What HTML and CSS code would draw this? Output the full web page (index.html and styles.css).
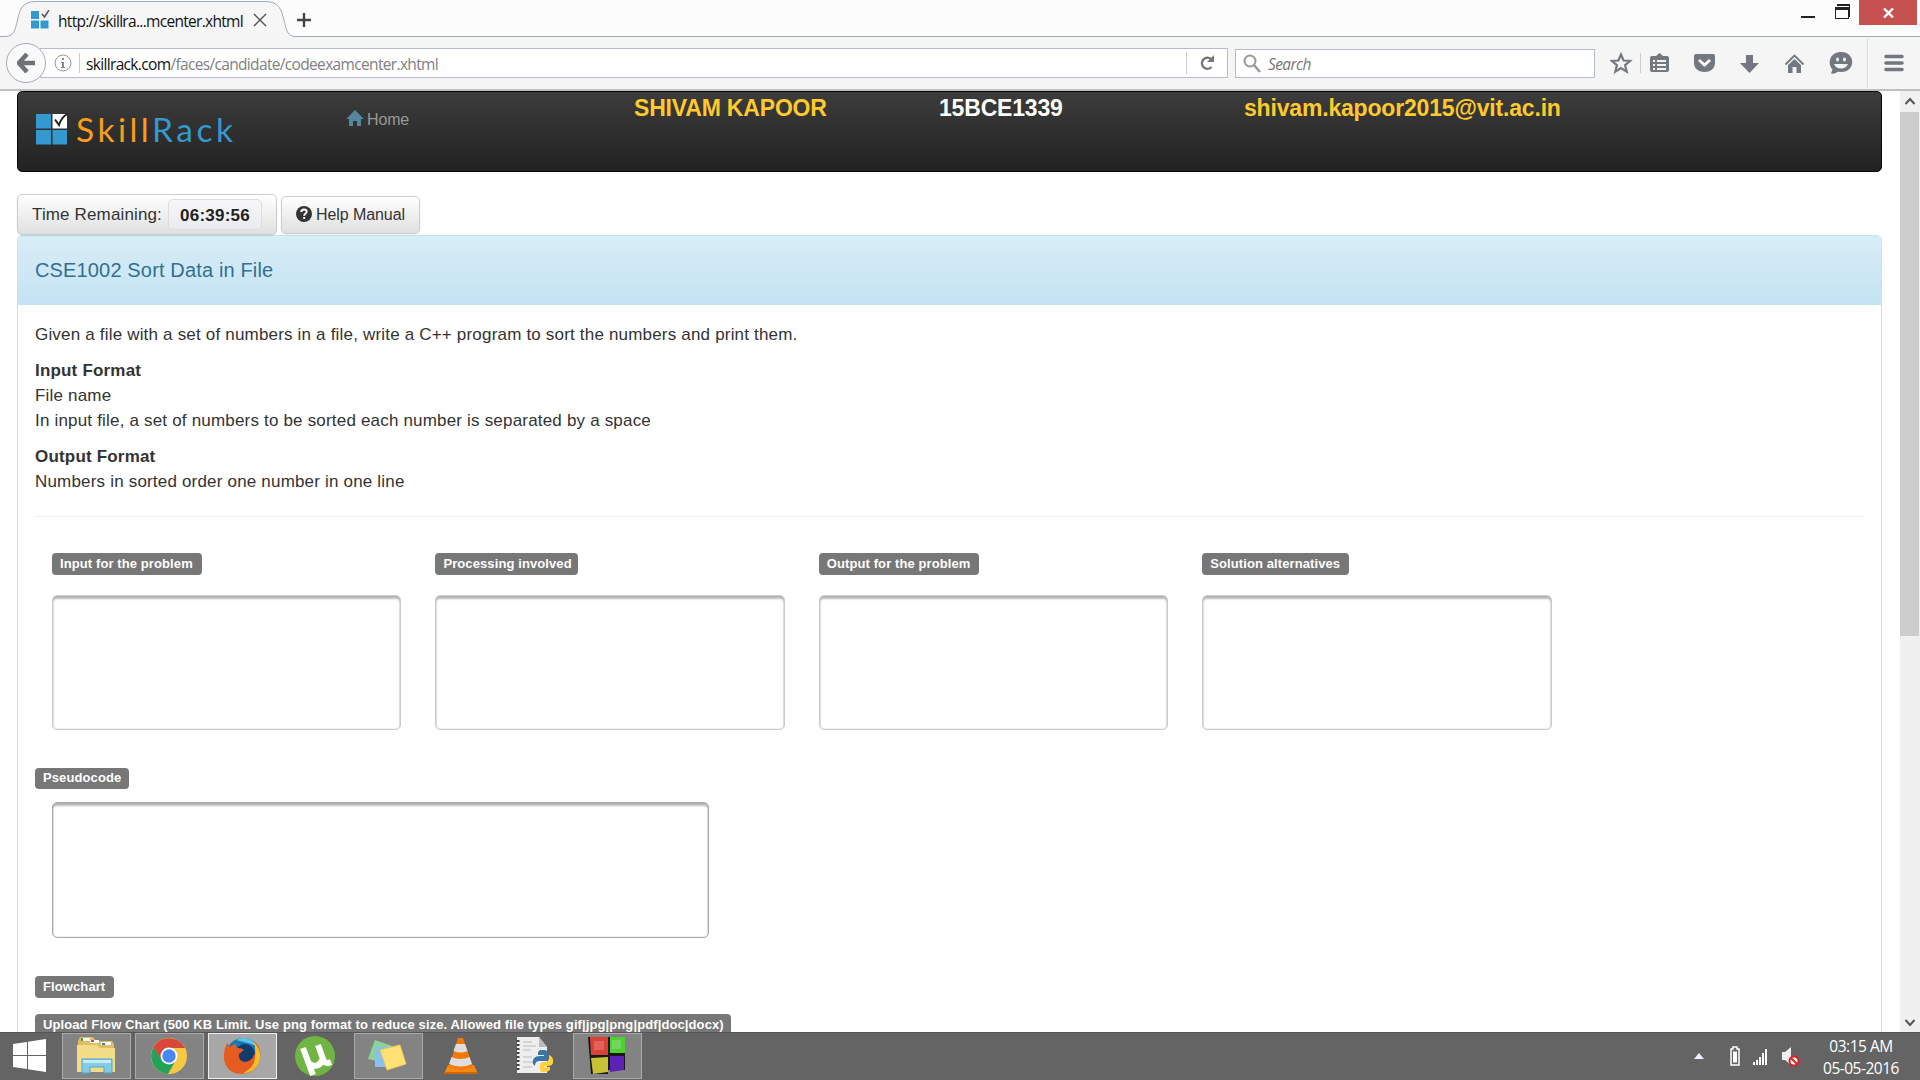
FILE: index.html
```html
<!DOCTYPE html>
<html lang="en">
<head>
<meta charset="utf-8">
<title>SkillRack</title>
<link rel="stylesheet" href="styles.css">
</head>
<body>
<div class="screen">
  <header class="tabstrip">
    <svg class="tab-shape" width="310" height="37" viewBox="0 0 310 37"><path d="M0 36.5H5C14 36.500 15 30 17.500 20C20 8 23 1.500 36 1.500H265C279 1.500 281 9 284 20C286.500 30 287 36.500 296 36.500V38H0Z" fill="#f6f6f6"/><path d="M0 36.500H5C14 36.500 15 30 17.500 20C20 8 23 1.500 36 1.500H265C279 1.500 281 9 284 20C286.500 30 287 36.500 296 36.500H310" fill="none" stroke="#a0abb6"/></svg>
    <div class="tab">
      <svg width="20" height="19" viewBox="0 0 20 19"><path fill="#3499cf" d="M1 1h8v8H1zM1 10.500h8v8H1zM10.500 10.500h8v8h-8z"/><path fill="#eee" d="M10.500 1h8v8h-8z"/><path d="M12 4l2.500 3L19 0" fill="none" stroke="#555" stroke-width="1.500"/></svg>
      <span class="tab-title">http://skillra...mcenter.xhtml</span>
      <svg class="tab-x" width="14" height="14" viewBox="0 0 14 14"><path d="M1 1l12 12M13 1L1 13" stroke="#555" stroke-width="1.400"/></svg>
      <svg class="tab-plus" width="16" height="16" viewBox="0 0 16 16"><path d="M8 1v14M1 8h14" stroke="#444" stroke-width="2.400"/></svg>
    </div>
    <div class="window-buttons">
      <svg width="50" height="25" viewBox="0 0 50 25"><path d="M0 16h14v2H0z" fill="#222"/><path d="M34 7h14v12H34zM35 10v8h12v-8z" fill="#222" fill-rule="evenodd"/><path d="M36 4h13v13h-1V6H36z" fill="#222"/></svg>
      <div class="close"><svg width="11" height="10" viewBox="0 0 11 10"><path d="M1 .500l9 9M10 .500l-9 9" stroke="#fff" stroke-width="2.400"/></svg></div>
    </div>
  </header>
  <nav class="toolbar">
    <div class="back"><svg width="18" height="20" viewBox="0 0 18 20"><path d="M10 1L2 10l8 9M2 10h16" fill="none" stroke="#6e7175" stroke-width="4.500"/></svg></div>
    <div class="url">
      <svg width="18" height="18" viewBox="0 0 18 18"><circle cx="9" cy="9" r="8" fill="none" stroke="#999"/><path d="M8 4h2v2H8zM7 8h3v5h1v1H7v-1h1V9H7z" fill="#888"/></svg>
      <i class="url-sep"></i><span class="url-text"><b>skillrack.com</b>/faces/candidate/codeexamcenter.xhtml</span>
      <span class="reload"><svg width="16" height="16" viewBox="0 0 16 16"><path d="M12.500 12a5.500 5.500 0 1 1-.5-8" fill="none" stroke="#777" stroke-width="2.500"/><path d="M15 0v7H8z" fill="#777"/></svg></span>
    </div>
    <div class="search"><svg width="18" height="19" viewBox="0 0 18 19"><circle cx="7" cy="7" r="5.500" fill="none" stroke="#999" stroke-width="2"/><path d="M11 11l6 7" stroke="#999" stroke-width="2.500"/></svg><span>Search</span></div>
    <svg class="tools" width="310" height="52" viewBox="1610 37 310 52" fill="#737780">
      <path d="M1621 54.500l2.600 6 6.400.500-4.900 4.200 1.600 6.400-5.700-3.600-5.700 3.600 1.600-6.400-4.900-4.200 6.400-.500z" fill="none" stroke="#737780" stroke-width="2.200"/>
      <path d="M1640 53h1v20h-1z" fill="#ccc"/>
      <path d="M1652 56h4l3.500-3 3.500 3h4q2 0 2 2v12q0 2-2 2h-15q-2 0-2-2V58q0-2 2-2z"/><path d="M1653 60h2v2h-2zm4 0h9v2h-9zm-4 4h2v2h-2zm4 0h9v2h-9zm-4 4h2v2h-2zm4 0h9v2h-9z" fill="#f5f5f5"/>
      <path d="M1696 54h17q2 0 2 2v7c0 12-21 12-21 0v-7q0-2 2-2z"/><path d="M1699 60l5.500 5 5.500-5" fill="none" stroke="#fff" stroke-width="2.800"/>
      <path d="M1746 55h7v8h6l-9.500 10-9.500-10h6z"/>
      <path d="M1785.500 64.500l9-9 9 9" fill="none" stroke="#737780" stroke-width="1.800"/><path d="M1788 65l6.500-6 6.500 6v8h-4.500v-6h-4v6h-4.500z"/>
      <path d="M1841 52c15 0 15 20 0 20l-3-.3q-4 2.600-7 1.800l1.500-4c-6-7-2-17.500 8.500-17.500z"/><g fill="#f5f5f5"><ellipse cx="1837.500" cy="59.500" rx="1.500" ry="2"/><ellipse cx="1844.500" cy="59.500" rx="1.500" ry="2"/><path d="M1834 64h14c-2 6-12 6-14 0z"/></g>
      <path d="M1867 38h1v50h-1z" fill="#ddd"/>
      <g stroke="#737780" stroke-width="3.600" stroke-linecap="round"><path d="M1886 56.500h16M1886 63h16M1886 69.500h16"/></g>
    </svg>
  </nav>
  <div class="viewport">
    <main class="page">
      <div class="navbar">
        <div class="brand">
          <svg width="36" height="36" viewBox="0 0 36 36"><path fill="#3499cf" d="M0 4h15v14.500H0zM0 20h15v14.500H0zM16.500 20H31v14.500H16.500z"/><path fill="#fff" d="M16.500 4H31v14.500H16.500z"/><path d="M19 9.500l4 5.500q2-7 8-11" fill="none" stroke="#222" stroke-width="2"/></svg>
          <span class="brand-name"><span class="orange">Skill</span>Rack</span>
        </div>
        <div class="home"><svg width="18" height="17" viewBox="0 0 18 17"><path d="M9 0l9 9h-3v7h-4v-5H7v5H3V9H0z" fill="#55859f"/></svg><span class="home-t">Home</span></div>
        <span class="who name">SHIVAM KAPOOR</span>
        <span class="who reg">15BCE1339</span>
        <span class="who mail">shivam.kapoor2015@vit.ac.in</span>
      </div>
      <div class="actions">
        <div class="btn timer"><span class="timer-t">Time Remaining:</span><b class="clock">06:39:56</b></div>
        <div class="btn help"><svg width="16" height="16" viewBox="0 0 16 16"><circle cx="8" cy="8" r="8" fill="#333"/><path d="M5.300 6q0-2.500 2.700-2.500t2.700 2.300q0 1.200-1.500 2Q8.200 8.400 8.200 9.700" fill="none" stroke="#fff" stroke-width="2"/><path d="M7.200 11h2v2h-2z" fill="#fff"/></svg><span class="help-t">Help Manual</span></div>
      </div>
      <section class="panel">
        <h1><span class="title">CSE1002 Sort Data in File</span></h1>
        <div class="content">
          <p>Given a file with a set of numbers in a file, write a C++ program to sort the numbers and print them.</p>
          <p><b>Input Format</b><br>File name<br>In input file, a set of numbers to be sorted each number is separated by a space</p>
          <p><b>Output Format</b><br>Numbers in sorted order one number in one line</p>
          <hr>
          <div class="fields">
            <div class="field"><span class="badge w1">Input for the problem</span><div class="area"></div></div>
            <div class="field"><span class="badge w2">Processing involved</span><div class="area"></div></div>
            <div class="field"><span class="badge w3">Output for the problem</span><div class="area"></div></div>
            <div class="field"><span class="badge w4">Solution alternatives</span><div class="area"></div></div>
          </div>
          <span class="badge pseudo">Pseudocode</span>
          <div class="area wide"></div>
          <span class="badge flow">Flowchart</span>
          <span class="badge upload">Upload Flow Chart (500 KB Limit. Use png format to reduce size. Allowed file types gif|jpg|png|pdf|doc|docx)</span>
        </div>
      </section>
    </main>
    <aside class="scrollbar">
      <svg width="20" height="21" viewBox="0 0 20 21"><path d="M5.500 13L10 8l4.500 5" fill="none" stroke="#555" stroke-width="2"/></svg>
      <div class="thumb"></div>
      <svg class="down" width="20" height="21" viewBox="0 0 20 21"><path d="M5.500 9l4.500 5L14.500 9" fill="none" stroke="#555" stroke-width="2"/></svg>
    </aside>
  </div>
  <footer class="taskbar">
    <div class="task start"><svg width="34" height="34" viewBox="0 0 34 34"><path fill="#fff" d="M0 5l14-2v13H0zM15 2.800L33 0v16H15zM0 17h14v13L0 28zM15 17h18v16l-18-2.800z"/></svg></div>
    <div class="task open"><svg width="42" height="40" viewBox="0 0 42 40"><path d="M3 5l2-4h13l3 4h16l2 3v28H3z" fill="#dfbd62"/><path d="M6 2h9v3H6zM15 4h9v3h-9zM26 6h10v3H26z" fill="#fff"/><path d="M6 2h2v3H6z" fill="#35a34a"/><path d="M16 4h3v2h-3z" fill="#d34b35"/><path d="M27 7h3v2h-3z" fill="#3482c5"/><path d="M2 9h20l3 3h15v24H2z" fill="#f2dc87"/><path d="M7 23h30v14h-8v-6H15v6H7z" fill="#83cbe7" stroke="#4ca5ce"/><path d="M8 24h28v3H8z" fill="#c5edf8"/></svg></div>
    <div class="task open"><svg width="38" height="38" viewBox="0 0 38 38"><circle cx="19" cy="19" r="18" fill="#f7c842"/><path d="M3.500 10A18 18 0 0 1 35 11H19l-8 12z" fill="#d9473c"/><path d="M3.500 10A18 18 0 0 0 18 37l8-14H12z" fill="#24a15b"/><circle cx="19" cy="19" r="8.500" fill="#fff"/><circle cx="19" cy="19" r="6.700" fill="#4687f2"/></svg></div>
    <div class="task open active"><svg width="38" height="38" viewBox="0 0 38 38"><circle cx="20" cy="18" r="17" fill="#1878b5"/><path d="M13 3q13-6 21 6l-9-3z" fill="#5ec5e8"/><circle cx="22" cy="17" r="10" fill="#123a6b"/><path d="M4 6l3 4 6-4q-1 4 2 5 4 0 6 2l-5 4q-1 7 6 8 6-1 8-5 5-6 1-16 8 7 6 17-4 16-19 16Q3 36 1 22 0 14 4 6z" fill="#e65b20"/><path d="M31 5q9 10 5 20-5 11-16 11 11-5 12-15 1-8-1-16z" fill="#f9bd27"/></svg></div>
    <div class="task"><svg width="42" height="42" viewBox="0 0 42 42"><circle cx="21" cy="21" r="20" fill="#70b443"/><path d="M9 13l10 27M14 28c7 5 12 3 14-3M24 10l5 14q2 6 8 3" fill="none" stroke="#fff" stroke-width="6"/></svg></div>
    <div class="task open"><svg width="42" height="36" viewBox="0 0 42 36"><path d="M8 2l17 6-6 17L1 21z" fill="#8bd39a"/><path d="M8 9h20v20H8z" fill="#89bff1"/><path d="M13 12l20-5 6 19-19 6z" fill="#ffe175" stroke="#ecc957"/></svg></div>
    <div class="task"><svg width="36" height="40" viewBox="0 0 36 40"><path d="M5 29h26l4 9H1z" fill="#f58a12"/><path d="M1 36h34v2H1z" fill="#cf6605"/><path d="M15 2h5l10 29q-12 6-24 0z" fill="#f57900"/><path d="M13 8h9l2.500 7q-7 3-14 0zM8.500 21q9 4 18 0l2.500 7q-11 5-23 0z" fill="#dedede"/></svg></div>
    <div class="task"><svg width="40" height="40" viewBox="0 0 40 40"><path d="M3 1h22l8 10v26H3z" fill="#eee"/><path d="M25 1v10h8z" fill="#bbb"/><path d="M4 4v32" stroke="#444" stroke-width="3" stroke-dasharray="2 2"/><path d="M9 6h9M9 10h13M9 14h8M9 21h9M9 26h12M9 31h9" stroke="#bbb"/><path d="M26 14h4q4 0 4 4v7H24q-3 1-3 5-4-3-1-8 2-2 6-2h4v-1h-6v-3z" fill="#3876a8"/><path d="M35 19q5 2 4 8-1 3-5 3h-4v1h6v3q-5 4-10 1v-6q0-3 4-3 5 0 5-4z" fill="#ffd23e"/></svg></div>
    <div class="task open"><svg width="40" height="40" viewBox="0 0 40 40"><path d="M1 1h20v37H4zM21 1h17v33H21z" fill="#181818"/><path d="M3 1h18v18H4z" fill="#dc4039"/><path d="M23 1h15v16H23z" fill="#50cf35"/><path d="M4 22l17-1v15L6 38z" fill="#c8c133"/><path d="M23 20h14v14l-14 2z" fill="#5b22b3"/><path d="M7 5h10v9H7zM25 4h9v9h-9z" fill="#fff" opacity=".18"/></svg></div>
    <div class="tray">
      <svg width="110" height="24" viewBox="0 0 110 24"><path d="M0 14l5-6 5 6z" fill="#eef"/><path d="M37 4h2V2h4v2h2v16h-8z" fill="none" stroke="#fff" stroke-width="1.500"/><path d="M39 6.500h4v11h-4z" fill="#fff"/><path d="M59 17h2v3h-2zM62 15h2v5h-2zM65 12h2v8h-2zM68 8h2v12h-2zM71 4h2v16h-2z" fill="#fff"/><path d="M88 7h3l6-5v18l-6-5h-3z" fill="#eee"/><circle cx="100" cy="16" r="4.500" fill="#fff" stroke="#d92424" stroke-width="2"/><path d="M97 13l6 6" stroke="#d92424" stroke-width="2"/></svg>
      <div class="time"><span>03:15 AM</span><span>05-05-2016</span></div>
    </div>
  </footer>
</div>
</body>
</html>
```
FILE: styles.css
```css
* { box-sizing: border-box; }
body { margin: 0; background: #fff; color: #333; font-family: "Liberation Sans", Arial, sans-serif; }
.screen { width: 1920px; height: 1080px; overflow: hidden; display: flex; flex-direction: column; }
svg { display: block; flex: none; }
span, b { white-space: nowrap; }
.tabstrip { height: 37px; flex: none; position: relative; display: flex; justify-content: space-between; background: #fcfcfc; border-bottom: 1px solid #a0abb6; font: 15.500px "Open Sans", sans-serif; }
.tab-shape { position: absolute; left: 0; top: 0; }
.tab { position: relative; display: flex; align-items: center; padding: 3px 0 0 30px; color: #111; }
.tab-title { width: 195px; margin-left: 8px; padding-top: 2px; letter-spacing: -.7px; }
.tab-plus { margin-left: 29px; }
.window-buttons { display: flex; padding-right: 3px; }
.window-buttons > svg { margin-right: 8px; }
.close { width: 58px; height: 25px; background: #c75050; display: grid; place-items: center; }
.toolbar { height: 54px; flex: none; display: flex; align-items: center; background: #f5f5f5; border-bottom: 2px solid #bfbfbf; padding-left: 6px; font: 15.500px "Open Sans", sans-serif; }
.back { width: 40px; height: 40px; flex: none; border: 1px solid #a4adb8; border-radius: 50%; background: #fafafa; display: grid; place-items: center; z-index: 1; }
.url { width: 1188px; height: 30px; margin-left: -6px; flex: none; display: flex; align-items: center; border: 1px solid #b5bec8; background: #fff; padding-left: 13px; color: #808080; }
.url-sep { width: 1px; height: 20px; background: #ccc; margin: 0 6px 0 7px; }
.url b { font-weight: 400; color: #111; }
.url-text { padding-top: 2px; letter-spacing: -.66px; }
.reload { margin-left: auto; width: 41px; height: 22px; border-left: 1px solid #ccc; display: grid; place-items: center; }
.search { width: 360px; height: 29px; margin-left: 7px; flex: none; border: 1px solid #b5bec8; background: #fff; display: flex; align-items: center; gap: 7px; padding-left: 7px; font-style: italic; color: #777; letter-spacing: -.6px; }
.search span { padding-top: 2px; }
.tools { margin-left: 15px; }
.viewport { height: 941px; flex: none; display: flex; overflow: hidden; }
.page { width: 1900px; padding-left: 17px; }
.navbar { width: 1865px; height: 81px; display: flex; align-items: flex-start; border: 1px solid #080808; border-radius: 5px; background: linear-gradient(#3c3c3c, #222); padding-left: 18px; }
.brand { width: 310px; display: flex; padding-top: 18px; }
.brand-name { margin-left: 4px; margin-top: -1px; font: 33.500px/40px Lato, sans-serif; letter-spacing: 3.500px; color: #3499cf; }
.orange { color: #f99d1c; }
.home { width: 288px; display: flex; align-items: center; gap: 3px; padding-top: 18px; color: #999; font-size: 16px; line-height: 20px; }
.home svg { margin-top: -3px; }
.home-t { letter-spacing: -.15px; }
.who { font-weight: bold; font-size: 23px; line-height: 26px; padding-top: 3px; color: #ffca2c; letter-spacing: -.18px; }
.name { width: 305px; }
.reg { width: 305px; color: #fff; }
.actions { height: 63px; padding-top: 22px; display: flex; gap: 4px; }
.btn { border: 1px solid #ccc; border-radius: 5px; background: linear-gradient(#fff, #e0e0e0); display: flex; align-items: center; box-shadow: 0 1px 2px #0001; font-size: 17px; }
.timer { width: 260px; height: 41px; padding-left: 14px; }
.timer-t { width: 136px; padding-top: 1px; letter-spacing: .14px; }
.clock { width: 94px; height: 31px; line-height: 31px; text-align: center; border: 1px solid #ddd; border-radius: 5px; background: linear-gradient(#f7f7f8, #e9ebef); color: #222; letter-spacing: .25px; }
.help { width: 139px; height: 38px; margin-top: 2px; padding-left: 14px; gap: 4px; font-size: 16px; }
.help svg { margin-top: -3px; }
.help-t { letter-spacing: -.08px; }
.panel { width: 1865px; height: 900px; border: 1px solid #bce8f1; border-radius: 5px 5px 0 0; }
h1 { height: 69px; margin: 0; padding-left: 17px; background: linear-gradient(#d9edf7, #c4e3f3); color: #31708f; font-size: 20px; font-weight: 400; line-height: 69px; letter-spacing: .15px; }
.content { padding: 17px 17px 0; font-size: 17px; line-height: 25px; letter-spacing: .187px; }
p { margin: 0 0 11px; }
hr { border: 0; border-top: 1px solid #eee; margin: 22px 0 36px; }
.badge { display: block; height: 22px; border-radius: 4px; background: #777; color: #fff; font-weight: bold; font-size: 13px; line-height: 21px; padding-left: 8px; letter-spacing: .1px; }
.fields { display: flex; gap: 34px; padding-left: 17px; margin-bottom: 38px; }
.field { width: 349.400px; }
.w1 { width: 150px; } .w2 { width: 143px; } .w3 { width: 160px; } .w4 { width: 147px; }
.area { height: 135px; margin-top: 20px; border: 1px solid #ccc; border-radius: 5px; background: #fff; box-shadow: inset 0 3px 2px #0004, inset 0 0 2px #0003; }
.pseudo { width: 94px; height: 21px; line-height: 20px; }
.wide { width: 657px; height: 136px; margin: 13px 0 38px 17px; border-color: #aaa; }
.flow { width: 79px; margin-bottom: 16px; }
.upload { width: 696px; }
.scrollbar { width: 20px; height: 941px; background: #f0f0f0; display: flex; flex-direction: column; }
.thumb { height: 524px; width: 19px; background: #cdcdcd; }
.down { margin-top: auto; }
.taskbar { height: 48px; flex: none; display: flex; align-items: flex-start; gap: 4px; background: #646464; border-top: 1px solid #555; }
.task { width: 69px; height: 46px; display: grid; place-items: center; }
.task svg { margin-left: -1px; }
.start { width: 58px; }
.start svg { margin-left: 2px; }
.open { border: 1px solid #aaa; background: #838383; }
.active { border-color: #eee; background: #a7a7a7; }
.tray { margin-left: auto; display: flex; align-items: center; height: 47px; color: #fff; }
.tray > svg { margin-right: 2px; }
.time { width: 114px; padding-right: 4px; padding-top: 1px; display: flex; flex-direction: column; align-items: center; font: 15.500px/22px "Open Sans", sans-serif; letter-spacing: -.5px; }
```
